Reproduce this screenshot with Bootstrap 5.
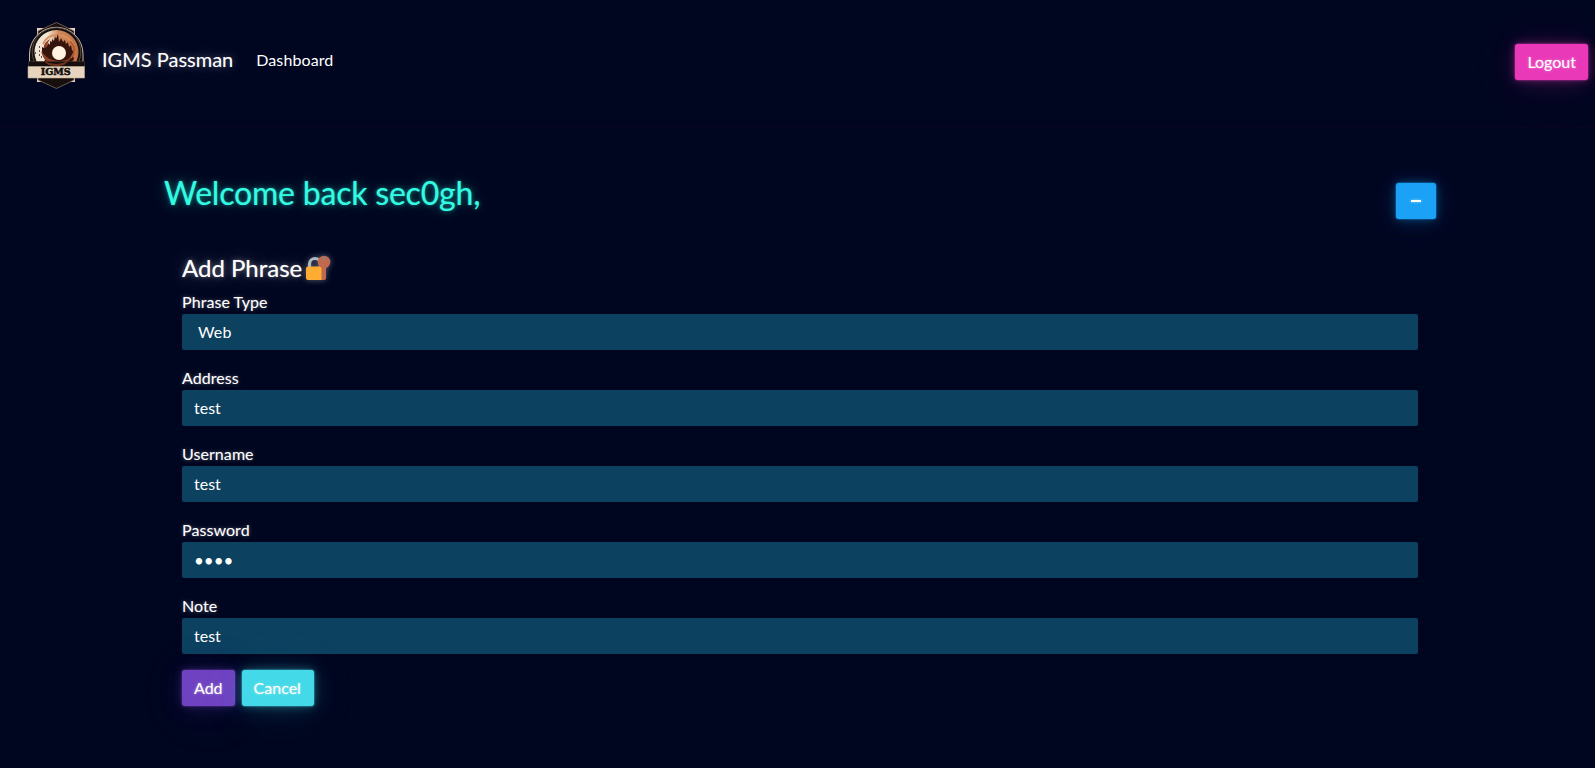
<!DOCTYPE html>
<html lang="en" data-bs-theme="dark">
<head>
<meta charset="utf-8">
<meta name="viewport" content="width=device-width, initial-scale=1">
<title>IGMS Passman</title>
<link href="https://cdn.jsdelivr.net/npm/bootstrap@5.3.0/dist/css/bootstrap.min.css" rel="stylesheet">
<style>
body{font-family:Lato,"Liberation Sans",sans-serif;background:#000620;color:#fff;height:100vh;overflow:hidden}
.top-nav{height:127px;padding:22px 7px 0 27px;border-bottom:1px solid #0e0522}
.logo{width:59px;height:67px;display:block}
.brand-name{font-size:20px;line-height:30px;margin:22px 23px 0 16px;color:#fff;text-shadow:0 0 1px rgba(255,255,255,.3),0 0 8px rgba(255,255,255,.35),0 0 24px rgba(255,255,255,.25)}
.top-nav .nav-link{margin-top:26px;padding:0;color:#fff;line-height:24px;letter-spacing:.1px}
.btn{--bs-btn-padding-y:6px;--bs-btn-padding-x:12px;border:0;border-radius:3px;line-height:24px;color:#fff!important;text-shadow:0 0 1px rgba(255,255,255,.3),0 0 3px rgba(255,255,255,.4);background:var(--glow);box-shadow:0 0 2px var(--glow),0 0 10px color-mix(in srgb,var(--glow) 35%,transparent),0 2px 24px color-mix(in srgb,var(--glow) 18%,transparent),0 5px 60px color-mix(in srgb,var(--glow) 8%,transparent)}
.btn:hover{background:var(--glow)}
.glow-pink{--glow:#ea39b8;margin-top:22px}
.glow-blue{--glow:#1ba2f6;width:40px;height:36px;margin-top:10px}
.minus{width:10px;height:2px;background:#fff;box-shadow:0 0 3px rgba(255,255,255,.5)}
.glow-purple{--glow:#6f42c1;margin-right:7px}
.glow-cyan{--glow:#44d9e8;padding-right:13px}
.page{margin:46px 159px 0 164px}
.welcome{font-size:32px;line-height:38px;margin:1px 0 0;font-weight:400;letter-spacing:-.2px;color:#32fbe2;text-shadow:0 0 1px rgba(50,251,226,.5),0 0 5px rgba(50,251,226,.45),0 0 16px rgba(50,251,226,.3),0 0 40px rgba(50,251,226,.15)}
.head-row{height:62px}
.panel{background:transparent;border:1px solid #01061a;border-radius:0;color:#fff}
.panel .card-body{padding:17px}
.panel h4{font-size:24px;line-height:29px;margin-bottom:8px;font-weight:400;text-shadow:0 0 1px rgba(255,255,255,.5),0 0 6px rgba(255,255,255,.4),0 0 22px rgba(255,255,255,.3)}
.emoji{width:26px;height:26px;margin-left:3px;filter:drop-shadow(0 0 3px rgba(255,255,255,.35))}
.panel label{display:block;line-height:24px;letter-spacing:.07px;text-shadow:0 0 1px rgba(255,255,255,.25),0 0 4px rgba(255,255,255,.35)}
.panel .form-control{height:36px;border:0;border-radius:2px;background:#0d4160;color:#fff;padding:5px 12px 7px;line-height:24px}
.panel .form-control.kind{padding-left:16px;letter-spacing:.15px}
.panel .form-control[type=password]{font-size:17px;padding:6px 12px}
</style>
</head>
<body>
<nav class="top-nav d-flex align-items-start">
  <svg class="logo" viewBox="0 0 59 67" aria-label="IGMS">
    <defs>
      <linearGradient id="sky"><stop offset=".3" stop-color="#f1e5d5"/><stop offset=".55" stop-color="#d28a5e"/><stop offset="1" stop-color="#c06e40"/></linearGradient>
    </defs>
    <path d="M10 6h38v54H10z" fill="#e8d6c4"/>
    <path d="M29.500 .5 47 9v49L29.500 66.500 11 58V9z" fill="#160f0d" stroke="#84705f" stroke-width=".8"/>
    <path d="M2.500 42V32a26.500 26.500 0 0 1 53.500 0v10z" fill="#15100e" stroke="#c7b6a6" stroke-width="1"/>
    <circle cx="29.500" cy="30" r="24.300" fill="none" stroke="#65564c" stroke-width=".8"/>
    <circle cx="29.500" cy="30" r="22" fill="url(#sky)"/>
    <path d="M16 22q4-9 14-9 12 0 17 11" fill="none" stroke="#d7925f" stroke-width="2"/>
    <path d="M15 30v-5l2 1 1-4 2 2 1-3 2 2v-4l2 1v-3l2 2 1-5 1 3 2-5 1 8 2-4 2 4 2-2 1 4 2-2 1 5 2-2 1 5 2 2-1 4 1 3-4 6-8 5H24l-7-6 1-5z" fill="#35140c"/>
    <path d="M14 29q3 13 15 13 17 0 18-15-2 9-8 11-9 3-18-2-5-4-7-7M17 26q-1-5 6-9-3 4-3 8" fill="#8b4021"/>
    <path d="M43 19q8 8 1 17" fill="none" stroke="#a85832" stroke-width="1.500"/>
    <circle cx="32" cy="31" r="7" fill="#fff3e2"/>
    <path d="M8 31h1M12 33h1M12 25h1M14 35h1M12 29h1" stroke="#3a2218" stroke-width="1.300"/>
    <path d="M1.500 39.500h56V45h-56z" fill="#160e0c" stroke="#493229" stroke-width=".6"/>
    <path d="M17 39q12 6 24 0-2 5-12 5-9 0-12-5" fill="#6c321e"/>
    <path d="M1 44.500h56.500V56H1z" fill="#e7d4bf" stroke="#bda98f" stroke-width=".6"/>
    <text x="28.700" y="52.700" text-anchor="middle" textLength="30" lengthAdjust="spacingAndGlyphs" font-family="DejaVu Serif, serif" font-weight="700" font-size="9.500" fill="#130e0d" stroke="#130e0d" stroke-width=".5">IGMS</text>
  </svg>
  <a class="brand-name text-decoration-none" href="#">IGMS Passman</a>
  <a class="nav-link" href="#">Dashboard</a>
  <button class="btn glow-pink ms-auto" type="button">Logout</button>
</nav>
<main class="page">
  <div class="head-row d-flex justify-content-between align-items-start">
    <h2 class="welcome">Welcome back sec0gh,</h2>
    <button class="btn glow-blue d-flex align-items-center justify-content-center" type="button" aria-label="Collapse"><span class="minus"></span></button>
  </div>
  <section class="card panel mb-3">
    <form class="card-body">
      <h4 class="d-flex align-items-center"><span>Add Phrase</span><svg class="emoji" viewBox="0 0 26 26" aria-hidden="true"><path d="M4.500 12V9a5.500 5.500 0 0 1 11 0v3" fill="none" stroke="#aab8c2" stroke-width="3.200"/><rect x="1" y="11.500" width="19" height="13.500" rx="2" fill="#ffac33"/><path d="M16.500 12h4.500v12q-1 1-2.500 1h-2z" fill="#c1694f"/><circle cx="19" cy="7" r="6.300" fill="#c1694f"/><circle cx="19" cy="3.500" r="1.500" fill="#8d8189"/></svg></h4>
      <div class="mb-3"><label for="kind">Phrase Type</label><input class="form-control kind" id="kind" value="Web"></div>
      <div class="mb-3"><label for="addr">Address</label><input class="form-control" id="addr" value="test"></div>
      <div class="mb-3"><label for="user">Username</label><input class="form-control" id="user" value="test"></div>
      <div class="mb-3"><label for="pass">Password</label><input class="form-control" id="pass" type="password" value="test"></div>
      <div class="mb-3"><label for="note">Note</label><input class="form-control" id="note" value="test"></div>
      <div class="d-flex mb-3"><button class="btn glow-purple" type="button">Add</button><button class="btn glow-cyan" type="button">Cancel</button></div>
    </form>
  </section>
  <section class="card panel"><div class="card-body"></div></section>
</main>
<script src="https://cdn.jsdelivr.net/npm/bootstrap@5.3.0/dist/js/bootstrap.bundle.min.js"></script>
</body>
</html>
